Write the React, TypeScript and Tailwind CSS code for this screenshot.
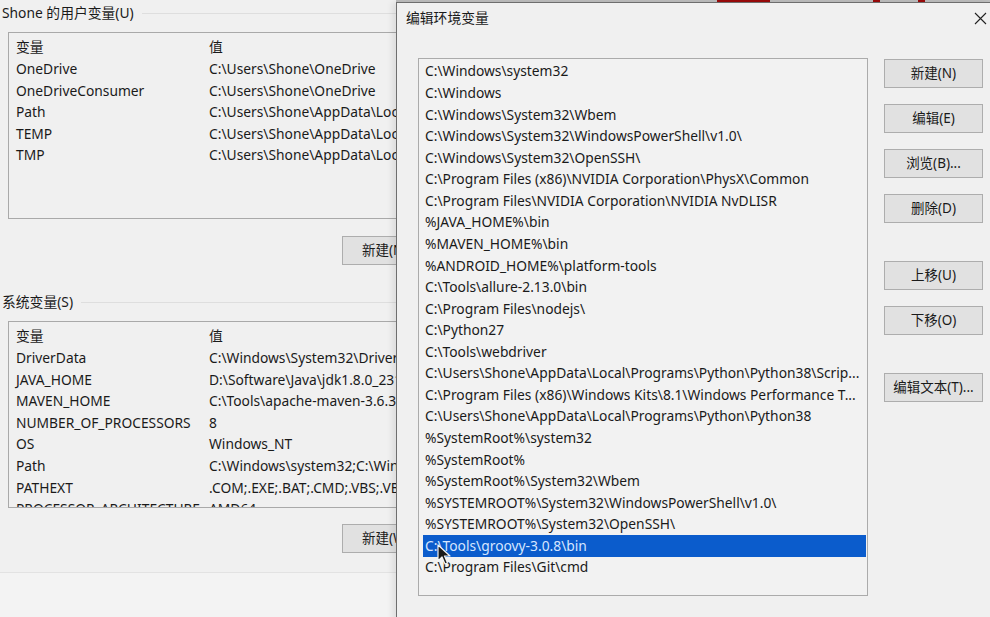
import React from "react";

const userVars = [
  ["OneDrive", "C:\\Users\\Shone\\OneDrive"],
  ["OneDriveConsumer", "C:\\Users\\Shone\\OneDrive"],
  ["Path", "C:\\Users\\Shone\\AppData\\Local\\Microsoft\\WindowsApps;"],
  ["TEMP", "C:\\Users\\Shone\\AppData\\Local\\Temp"],
  ["TMP", "C:\\Users\\Shone\\AppData\\Local\\Temp"],
];

const sysVars = [
  ["DriverData", "C:\\Windows\\System32\\Drivers\\DriverData"],
  ["JAVA_HOME", "D:\\Software\\Java\\jdk1.8.0_231"],
  ["MAVEN_HOME", "C:\\Tools\\apache-maven-3.6.3"],
  ["NUMBER_OF_PROCESSORS", "8"],
  ["OS", "Windows_NT"],
  ["Path", "C:\\Windows\\system32;C:\\Windows;C:\\Windows\\System32\\Wbem"],
  ["PATHEXT", ".COM;.EXE;.BAT;.CMD;.VBS;.VBE;.JS;.JSE;.WSF;.WSH;.MSC"],
  ["PROCESSOR_ARCHITECTURE", "AMD64"],
];

const paths = [
  "C:\\Windows\\system32",
  "C:\\Windows",
  "C:\\Windows\\System32\\Wbem",
  "C:\\Windows\\System32\\WindowsPowerShell\\v1.0\\",
  "C:\\Windows\\System32\\OpenSSH\\",
  "C:\\Program Files (x86)\\NVIDIA Corporation\\PhysX\\Common",
  "C:\\Program Files\\NVIDIA Corporation\\NVIDIA NvDLISR",
  "%JAVA_HOME%\\bin",
  "%MAVEN_HOME%\\bin",
  "%ANDROID_HOME%\\platform-tools",
  "C:\\Tools\\allure-2.13.0\\bin",
  "C:\\Program Files\\nodejs\\",
  "C:\\Python27",
  "C:\\Tools\\webdriver",
  "C:\\Users\\Shone\\AppData\\Local\\Programs\\Python\\Python38\\Scrip...",
  "C:\\Program Files (x86)\\Windows Kits\\8.1\\Windows Performance T...",
  "C:\\Users\\Shone\\AppData\\Local\\Programs\\Python\\Python38",
  "%SystemRoot%\\system32",
  "%SystemRoot%",
  "%SystemRoot%\\System32\\Wbem",
  "%SYSTEMROOT%\\System32\\WindowsPowerShell\\v1.0\\",
  "%SYSTEMROOT%\\System32\\OpenSSH\\",
  "C:\\Tools\\groovy-3.0.8\\bin",
  "C:\\Program Files\\Git\\cmd",
];

const SELECTED = 22;

function VarTable({ rows }: { rows: string[][] }) {
  return (
    <div className="ml-[8px] h-[187px] w-[560px] overflow-hidden border border-[#a9a9a9] pt-[4px]">
      <div className="flex h-[21.6px] items-center">
        <span className="w-[200px] pl-[7px]">变量</span>
        <span>值</span>
      </div>
      {rows.map(([name, value]) => (
        <div key={name} className="flex h-[21.6px] items-center whitespace-nowrap">
          <span className="w-[200px] shrink-0 pl-[7px]">{name}</span>
          <span>{value}</span>
        </div>
      ))}
    </div>
  );
}

function GroupTitle({ label }: { label: string }) {
  return (
    <div className="flex h-[26px] items-center">
      <span className="pl-[2px] pr-[8px]">{label}</span>
      <div className="h-px flex-1 bg-[#dedede]" />
    </div>
  );
}

function WinButton({ label, className = "" }: { label: string; className?: string }) {
  return (
    <div
      className={`flex h-[29px] w-[99px] shrink-0 items-center justify-center border border-[#adadad] bg-[#e1e1e1] text-[13.5px] text-[#1a1a1a] ${className}`}
    >
      {label}
    </div>
  );
}

function Cursor() {
  return (
    <svg className="absolute left-[437px] top-[544px]" width="14" height="22" viewBox="0 0 14 22">
      <path
        d="M1 1 L1 17 L5 13 L8 20 L10.5 19 L7.5 12 L13 12 Z"
        fill="#1a1a1a"
        stroke="#f4f4f4"
        strokeWidth="1.2"
        strokeLinejoin="round"
      />
    </svg>
  );
}

export default function App() {
  return (
    <div
      className="relative h-[617px] w-[990px] overflow-hidden bg-[#f0f0f0] text-[13.8px] text-[#1a1a1a]"
      style={{ fontFamily: '"Noto Sans", "Noto Sans CJK SC", sans-serif' }}
    >
      {/* main window: environment variables, cut where the dialog covers it */}
      <div className="w-[397px] overflow-hidden">
        <div className="w-[600px]">
          <GroupTitle label="Shone 的用户变量(U)" />
          <div className="mt-[6px]">
            <VarTable rows={userVars} />
          </div>
          <div className="mt-[17px] flex pl-[342px]">
            <WinButton label="新建(N)..." className="w-[100px] justify-start pl-[19px]" />
          </div>

          <div className="mt-[24px]">
            <GroupTitle label="系统变量(S)" />
          </div>
          <div className="mt-[6px]">
            <VarTable rows={sysVars} />
          </div>
          <div className="mt-[16px] flex pl-[342px]">
            <WinButton label="新建(W)..." className="w-[100px] justify-start pl-[19px]" />
          </div>
          <div className="mt-[19px] h-[60px] border-t border-[#e2e2e2] bg-[#f3f3f3]" />
        </div>
      </div>

      {/* window behind the dialog, peeking out at the top */}
      <div className="absolute left-[396px] top-0 flex h-[2px] w-[594px] bg-[#bdbdbd]">
        <div className="ml-[321px] w-[53px] bg-[#9b0b0b]" />
        <div className="ml-[103px] w-[7px] bg-[#9b0b0b]" />
        <div className="ml-[38px] w-[7px] bg-[#9b0b0b]" />
      </div>

      {/* edit environment variable dialog */}
      <div className="absolute left-[396px] top-[2px] h-[620px] w-[594px] border-l border-t border-[#6e6e6e] bg-[#f0f0f0] shadow-[-4px_0_6px_rgba(0,0,0,0.08)]">
        <div className="flex h-[30px] items-center justify-between pl-[9px] pr-[3px]">
          <span>编辑环境变量</span>
          <svg width="13" height="13" viewBox="0 0 13 13">
            <path d="M1 1 L12 12 M12 1 L1 12" stroke="#222" strokeWidth="1.1" />
          </svg>
        </div>

        <div className="mt-[25px] flex pl-[21px]">
          <div className="h-[538px] w-[450px] border border-[#ababab] bg-[#f2f2f2] pt-[2px]">
            {paths.map((p, i) => (
              <div
                key={p}
                className={`ml-[4px] mr-px flex h-[21.57px] items-center whitespace-nowrap pl-[2px] ${
                  i === SELECTED ? "bg-[#0b5ccc] text-[#d6e6ff]" : ""
                }`}
              >
                {p}
              </div>
            ))}
          </div>

          <div className="ml-[16px] flex flex-col pt-px">
            <WinButton label="新建(N)" />
            <WinButton label="编辑(E)" className="mt-[16px]" />
            <WinButton label="浏览(B)..." className="mt-[16px]" />
            <WinButton label="删除(D)" className="mt-[16px]" />
            <WinButton label="上移(U)" className="mt-[38px]" />
            <WinButton label="下移(O)" className="mt-[16px]" />
            <WinButton label="编辑文本(T)..." className="mt-[38px]" />
          </div>
        </div>
      </div>

      <Cursor />
    </div>
  );
}
